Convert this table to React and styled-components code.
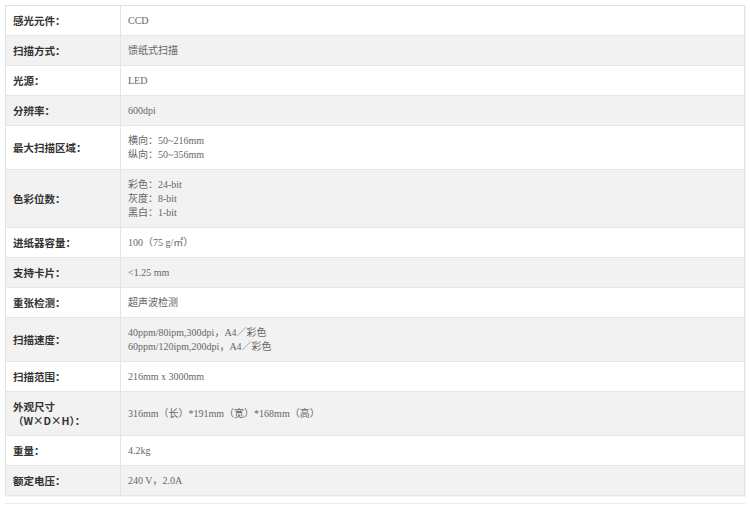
import React from 'react';
import styled, { createGlobalStyle } from 'styled-components';

const GlobalStyle = createGlobalStyle`
  html, body {
    margin: 0;
    padding: 0;
    background: #fff;
  }
`;

const Page = styled.div`
  padding: 5px 5px 0;
  font-family: "Liberation Serif", "Noto Sans CJK SC", serif;
`;

const SpecTable = styled.table`
  width: 740px;
  border-collapse: collapse;
  border: 1px solid #e2e2e2;
  box-shadow: 1px 1px 1px rgba(0, 0, 0, 0.04);
`;

const Row = styled.tr`
  background: ${props => (props.$alt ? '#f2f2f2' : '#fff')};
  border-bottom: 1px solid #e6e6e6;
`;

const LabelCell = styled.td`
  width: 100px;
  padding: 8px 7px 7px;
  border-right: 1px solid #e4e4e4;
  font-family: "Noto Sans CJK SC", sans-serif;
  font-size: 10.5px;
  font-weight: 700;
  line-height: 14px;
  color: #333;
  vertical-align: middle;
`;

const ValueCell = styled.td`
  padding: 8px 7px 7px;
  font-size: 10px;
  line-height: 14px;
  color: #666;
  vertical-align: middle;
`;

const Line = styled.div`
  white-space: nowrap;
`;

const Footer = styled.div`
  margin-top: 7px;
  height: 1px;
  background: #ececec;
`;

const specs = [
  ['感光元件：', ['CCD']],
  ['扫描方式：', ['馈纸式扫描']],
  ['光源：', ['LED']],
  ['分辨率：', ['600dpi']],
  ['最大扫描区域：', ['横向：50~216mm', '纵向：50~356mm']],
  ['色彩位数：', ['彩色：24-bit', '灰度：8-bit', '黑白：1-bit']],
  ['进纸器容量：', ['100（75 g/㎡）']],
  ['支持卡片：', ['<1.25 mm']],
  ['重张检测：', ['超声波检测']],
  ['扫描速度：', ['40ppm/80ipm,300dpi，A4／彩色', '60ppm/120ipm,200dpi，A4／彩色']],
  ['扫描范围：', ['216mm x 3000mm']],
  [['外观尺寸', '（W×D×H）：'], ['316mm（长）*191mm（宽）*168mm（高）']],
  ['重量：', ['4.2kg']],
  ['额定电压：', ['240 V，2.0A']],
];

export default function App() {
  return (
    <>
      <GlobalStyle />
      <Page>
        <SpecTable>
          <tbody>
            {specs.map(([label, values], i) => (
              <Row key={i} $alt={i % 2 === 1}>
                <LabelCell>
                  {Array.isArray(label)
                    ? label.map(l => <Line key={l}>{l}</Line>)
                    : label}
                </LabelCell>
                <ValueCell>
                  {values.map(v => (
                    <Line key={v}>{v}</Line>
                  ))}
                </ValueCell>
              </Row>
            ))}
          </tbody>
        </SpecTable>
        <Footer />
      </Page>
    </>
  );
}
